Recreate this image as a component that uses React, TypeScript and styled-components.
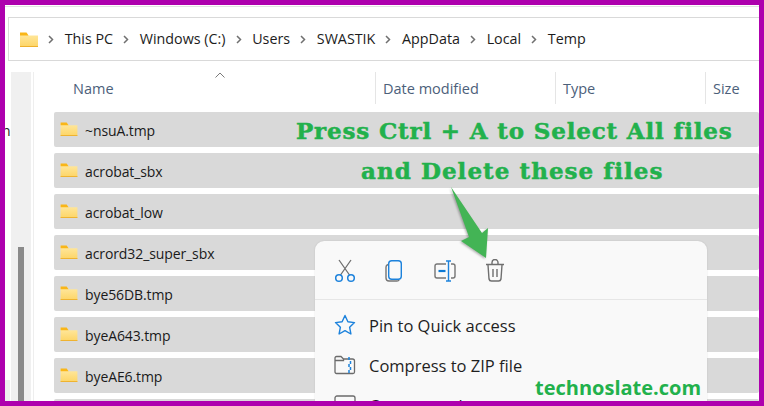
import React from "react";
import styled, { createGlobalStyle } from "styled-components";

const Global = createGlobalStyle`
  html, body { margin: 0; padding: 0; background: #fff; }
  body { width: 764px; height: 406px; overflow: hidden; font-family: "Open Sans", "Noto Sans", sans-serif; }
`;
const Frame = styled.div`
  position: relative; box-sizing: border-box; width: 764px; height: 406px;
  border: 5px solid #ae00ae; background: #fff; overflow: hidden;
  display: flex; flex-direction: column;
`;
const TopRule = styled.div`height: 1px; margin-top: 1px; background: #e2e2e2; flex: none;`;
const Breadcrumb = styled.nav`
  flex: none; box-sizing: border-box; height: 44px; margin: 10px 0 0 3px;
  border: 1px solid #d9d9d9; border-right: none;
  display: flex; align-items: center; padding-left: 11px;
  font-size: 14.3px; color: #1c1c1c;
`;
const Crumb = styled.span`white-space: nowrap; margin-top: -2px;`;
const Chevron = styled.svg`width: 6px; height: 9px; margin: 0 10.7px 0 10px; flex: none;`;
const RootFolder = styled.svg`width: 18px; height: 15px; flex: none;`;
const Body = styled.div`flex: 1; display: flex; margin-top: 11px; min-height: 0;`;
const Clip = styled.div`
  flex: none; width: 6px; display: flex; flex-direction: column; overflow: hidden;
  font-size: 14px; color: #1c1c1c;
`;
const ClipText = styled.div`margin: 49px 0 0 -3px; line-height: 20px; height: 20px;`;
const ClipPatch = styled.div`margin-top: auto; height: 21px; width: 5px; background: #efefef;`;
const Strip = styled.div`flex: none; width: 20px; background: #f0f0f0; display: flex; flex-direction: column; align-items: center;`;
const Thumb = styled.div`flex: 1; width: 6px; margin-top: 175px; background: #8a8a8a;`;
const Separator = styled.div`flex: none; width: 1px; margin-left: 2px; background: #eeeeee;`;
const Files = styled.div`flex: 1; display: flex; flex-direction: column; min-width: 0; padding-left: 20px; overflow: hidden;`;
const Header = styled.div`
  flex: none; position: relative; height: 32px; margin-bottom: 8px;
  display: grid; grid-template-columns: 321px 180px 150px 1fr;
  font-size: 14.5px; color: #4c607a;
`;
const Column = styled.div<{ $first?: boolean }>`
  display: flex; align-items: center; padding-left: ${p => (p.$first ? 19 : 7)}px;
  border-left: ${p => (p.$first ? "none" : "1px solid #e5e5e5")};
`;
const SortCaret = styled.svg`position: absolute; left: 161px; top: 0; width: 10px; height: 6px;`;
const Row = styled.div`
  flex: none; height: 35px; margin-bottom: 6px; border-radius: 2px; background: #d9d9d9;
  display: flex; align-items: center; padding-left: 6px; font-size: 14px; color: #1a1a1a;
`;
const RowFolder = styled.svg`width: 18px; height: 14px; flex: none; margin: -1px 7px 0 0;`;
const RowName = styled.span`white-space: nowrap; margin-top: 2px; letter-spacing: -.1px;`;
const Menu = styled.div`
  position: absolute; left: 310px; top: 236px; width: 392px; height: 190px;
  border-radius: 9px; background: #f9f9f9; box-shadow: 0 0 2px rgba(0,0,0,.12);
`;
const IconBar = styled.div`
  height: 59px; box-sizing: border-box; border-bottom: 1px solid #e6e6e6;
  display: flex; align-items: flex-start; padding: 18px 0 0 19px; gap: 28px;
`;
const ToolIcon = styled.svg`width: 22px; height: 24px; flex: none;`;
const MenuRow = styled.div`
  height: 40px; display: flex; align-items: center; padding-left: 19px;
  font-size: 16.5px; color: #1f1f1f;
`;
const MenuList = styled.div`padding-top: 5px;`;
const MenuIcon = styled.svg`width: 22px; height: 22px; flex: none; margin-right: 13px;`;
const Headline = styled.div<{ $x: number; $y: number; $spacing: number }>`
  position: absolute; left: ${p => p.$x}px; top: ${p => p.$y}px; white-space: nowrap;
  font: 700 23px/30px "DejaVu Serif", serif; letter-spacing: ${p => p.$spacing}px; color: #22b14c;
  -webkit-text-stroke: .5px #22b14c;
`;
const Arrow = styled.svg`
  position: absolute; left: 435px; top: 170px; width: 60px; height: 90px;
  filter: drop-shadow(-1px 1px 1px rgba(0,0,0,.3));
`;
const Brand = styled.div`
  position: absolute; left: 530px; top: 369px; white-space: nowrap;
  font: 700 20px/28px "Open Sans", sans-serif; color: #22b14c;
`;

const Folder = () => (
  <>
    <defs>
      <linearGradient id="fg" x1="0" y1="0" x2="0" y2="1">
        <stop offset="0" stopColor="#ffe9a3" />
        <stop offset="1" stopColor="#fdd566" />
      </linearGradient>
    </defs>
    <path d="M0 1h6.5l2 2.5H18V15H0z" fill="url(#fg)" />
    <path d="M0 0.5h6.5l2 3H0z" fill="#f9b618" />
    <path d="M0 14h18v1H0z" fill="#eeb02c" />
  </>
);
const crumbs = ["This PC", "Windows (C:)", "Users", "SWASTIK", "AppData", "Local", "Temp"];
const files = ["~nsuA.tmp", "acrobat_sbx", "acrobat_low", "acrord32_super_sbx", "bye56DB.tmp", "byeA643.tmp", "byeAE6.tmp", ""];
const Caret = () => (
  <Chevron viewBox="0 0 6 9"><path d="M1 1l3.5 3.5L1 8" fill="none" stroke="#707070" strokeWidth="1.5" /></Chevron>
);

export default function App() {
  return (
    <Frame>
      <Global />
      <TopRule />
      <Breadcrumb>
        <RootFolder viewBox="0 0 18 15"><Folder /></RootFolder>
        {crumbs.map(c => (
          <React.Fragment key={c}>
            <Caret />
            <Crumb>{c}</Crumb>
          </React.Fragment>
        ))}
      </Breadcrumb>
      <Body>
        <Clip>
          <ClipText>n</ClipText>
          <ClipPatch />
        </Clip>
        <Strip><Thumb /></Strip>
        <Separator />
        <Files>
          <Header>
            <Column $first>Name</Column>
            <Column>Date modified</Column>
            <Column>Type</Column>
            <Column>Size</Column>
            <SortCaret viewBox="0 0 10 6"><path d="M.5 5.500L5 1l4.500 4.500" fill="none" stroke="#7a7a7a" /></SortCaret>
          </Header>
          {files.map((f, i) => (
            <Row key={i}>
              <RowFolder viewBox="0 0 18 15"><Folder /></RowFolder>
              <RowName>{f}</RowName>
            </Row>
          ))}
        </Files>
      </Body>
      <Menu>
        <IconBar>
          <ToolIcon viewBox="0 0 22 24">
            <path d="M5 1l10.500 15M17 1L6.500 16" fill="none" stroke="#6f6f6f" strokeWidth="1.300" />
            <circle cx="5" cy="19" r="3.300" fill="none" stroke="#1c82dc" strokeWidth="1.500" />
            <circle cx="17" cy="19" r="3.300" fill="none" stroke="#1c82dc" strokeWidth="1.500" />
          </ToolIcon>
          <ToolIcon viewBox="0 0 22 24">
            <path d="M4 5.500c-1.200.4-2 1.200-2 2.500v11c0 2 1.300 3 3 3h8c1 0 1.800-.5 2.200-1.300" fill="none" stroke="#757575" strokeWidth="1.400" />
            <rect x="4.700" y="1.700" width="12.600" height="18.600" rx="3" fill="#f9f9f9" stroke="#1c82dc" strokeWidth="1.400" />
          </ToolIcon>
          <ToolIcon viewBox="0 0 22 24">
            <path d="M12 5H3a2 2 0 0 0-2 2v10a2 2 0 0 0 2 2h9M17 5h2a2 2 0 0 1 2 2v10a2 2 0 0 1-2 2h-2" fill="none" stroke="#757575" strokeWidth="1.400" />
            <path d="M4.500 12h7" stroke="#0a78d4" strokeWidth="2.200" />
            <path d="M12 2h5M12 22h5M14.500 2v20" stroke="#1c82dc" strokeWidth="1.400" fill="none" />
          </ToolIcon>
          <ToolIcon viewBox="0 0 22 24">
            <path d="M2 5.500h18M8 5V3.500a2.500 2.500 0 0 1 6 0V5M4 6l1 14a2.500 2.500 0 0 0 2.500 2h7A2.500 2.500 0 0 0 17 20l1-14M9 10v8M13 10v8" fill="none" stroke="#6f6f6f" strokeWidth="1.400" />
          </ToolIcon>
        </IconBar>
        <MenuList>
          <MenuRow>
            <MenuIcon viewBox="0 0 22 22">
              <path d="M11 1.500l2.900 6.300 6.600.8-4.900 4.600 1.300 6.800-5.900-3.400-5.900 3.400 1.300-6.800L1.500 8.600l6.600-.8z" fill="none" stroke="#1c82dc" strokeWidth="1.400" strokeLinejoin="round" />
            </MenuIcon>
            Pin to Quick access
          </MenuRow>
          <MenuRow>
            <MenuIcon viewBox="0 0 22 22">
              <path d="M1 5V4a1.500 1.500 0 0 1 1.500-1.500H7l2.500 2.500h9A2 2 0 0 1 20.500 7v11a1.500 1.500 0 0 1-1.500 1.500H2.500A1.500 1.500 0 0 1 1 18zM1 6.500h8.500L9.500 5" fill="none" stroke="#6b6b6b" strokeWidth="1.300" />
              <path d="M15 3v3M16.500 7v3M15 10v3M16.500 13v3M15 16v3" stroke="#1c82dc" strokeWidth="1.500" />
            </MenuIcon>
            Compress to ZIP file
          </MenuRow>
          <MenuRow>
            <MenuIcon viewBox="0 0 22 22">
              <rect x="1" y="2" width="20" height="16" rx="2" fill="none" stroke="#6b6b6b" strokeWidth="1.300" />
            </MenuIcon>
            Copy as path
          </MenuRow>
        </MenuList>
      </Menu>
      <Headline $x={291} $y={111} $spacing={0.83}>Press Ctrl + A to Select All files</Headline>
      <Headline $x={356} $y={151} $spacing={1.05}>and Delete these files</Headline>
      <Arrow viewBox="0 0 60 90">
        <path d="M11 12L42 58l6-5-2 30-25-17 8-4z" fill="#43b455" />
      </Arrow>
      <Brand>technoslate.com</Brand>
    </Frame>
  );
}
